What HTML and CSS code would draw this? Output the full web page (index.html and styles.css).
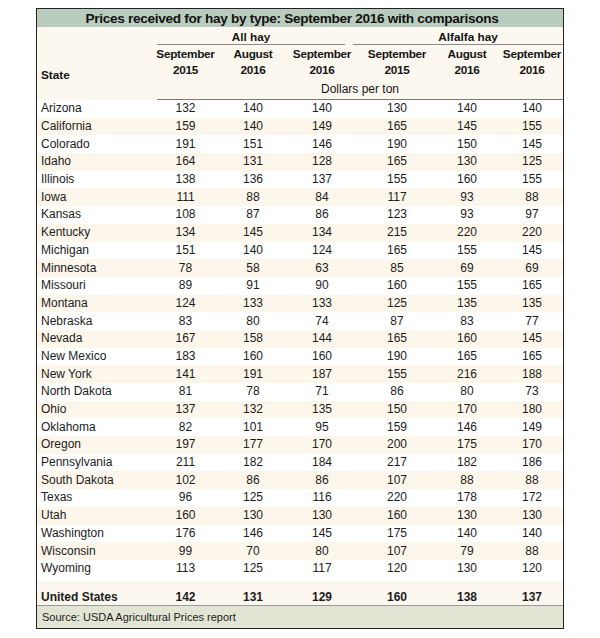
FILE: index.html
```html
<!DOCTYPE html>
<html>
<head>
<meta charset="utf-8">
<link rel="stylesheet" href="styles.css">
</head>
<body>
<div class="card">
  <div class="title">Prices received for hay by type: September 2016 with comparisons</div>
  <table class="grid">
    <colgroup>
      <col class="c-state"><col class="c1"><col class="c2"><col class="c3"><col class="c4"><col class="c5"><col class="c6">
    </colgroup>
    <thead>
      <tr class="group">
        <th></th>
        <th colspan="3"><div class="gl gl-all">All hay</div></th>
        <th colspan="3"><div class="gl gl-alf">Alfalfa hay</div></th>
      </tr>
      <tr class="cols">
        <th rowspan="2" class="state">State</th>
        <th>September<br>2015</th>
        <th>August<br>2016</th>
        <th>September<br>2016</th>
        <th>September<br>2015</th>
        <th>August<br>2016</th>
        <th class="last">September<br>2016</th>
      </tr>
      <tr class="units">
        <th colspan="6"><div class="ul">Dollars per ton</div></th>
      </tr>
    </thead>
    <tbody class="rows">
      <tr><td>Arizona</td><td>132</td><td>140</td><td>140</td><td>130</td><td>140</td><td class="last">140</td></tr>
      <tr><td>California</td><td>159</td><td>140</td><td>149</td><td>165</td><td>145</td><td class="last">155</td></tr>
      <tr><td>Colorado</td><td>191</td><td>151</td><td>146</td><td>190</td><td>150</td><td class="last">145</td></tr>
      <tr><td>Idaho</td><td>164</td><td>131</td><td>128</td><td>165</td><td>130</td><td class="last">125</td></tr>
      <tr><td>Illinois</td><td>138</td><td>136</td><td>137</td><td>155</td><td>160</td><td class="last">155</td></tr>
      <tr><td>Iowa</td><td>111</td><td>88</td><td>84</td><td>117</td><td>93</td><td class="last">88</td></tr>
      <tr><td>Kansas</td><td>108</td><td>87</td><td>86</td><td>123</td><td>93</td><td class="last">97</td></tr>
      <tr><td>Kentucky</td><td>134</td><td>145</td><td>134</td><td>215</td><td>220</td><td class="last">220</td></tr>
      <tr><td>Michigan</td><td>151</td><td>140</td><td>124</td><td>165</td><td>155</td><td class="last">145</td></tr>
      <tr><td>Minnesota</td><td>78</td><td>58</td><td>63</td><td>85</td><td>69</td><td class="last">69</td></tr>
      <tr><td>Missouri</td><td>89</td><td>91</td><td>90</td><td>160</td><td>155</td><td class="last">165</td></tr>
      <tr><td>Montana</td><td>124</td><td>133</td><td>133</td><td>125</td><td>135</td><td class="last">135</td></tr>
      <tr><td>Nebraska</td><td>83</td><td>80</td><td>74</td><td>87</td><td>83</td><td class="last">77</td></tr>
      <tr><td>Nevada</td><td>167</td><td>158</td><td>144</td><td>165</td><td>160</td><td class="last">145</td></tr>
      <tr><td>New Mexico</td><td>183</td><td>160</td><td>160</td><td>190</td><td>165</td><td class="last">165</td></tr>
      <tr><td>New York</td><td>141</td><td>191</td><td>187</td><td>155</td><td>216</td><td class="last">188</td></tr>
      <tr><td>North Dakota</td><td>81</td><td>78</td><td>71</td><td>86</td><td>80</td><td class="last">73</td></tr>
      <tr><td>Ohio</td><td>137</td><td>132</td><td>135</td><td>150</td><td>170</td><td class="last">180</td></tr>
      <tr><td>Oklahoma</td><td>82</td><td>101</td><td>95</td><td>159</td><td>146</td><td class="last">149</td></tr>
      <tr><td>Oregon</td><td>197</td><td>177</td><td>170</td><td>200</td><td>175</td><td class="last">170</td></tr>
      <tr><td>Pennsylvania</td><td>211</td><td>182</td><td>184</td><td>217</td><td>182</td><td class="last">186</td></tr>
      <tr><td>South Dakota</td><td>102</td><td>86</td><td>86</td><td>107</td><td>88</td><td class="last">88</td></tr>
      <tr><td>Texas</td><td>96</td><td>125</td><td>116</td><td>220</td><td>178</td><td class="last">172</td></tr>
      <tr><td>Utah</td><td>160</td><td>130</td><td>130</td><td>160</td><td>130</td><td class="last">130</td></tr>
      <tr><td>Washington</td><td>176</td><td>146</td><td>145</td><td>175</td><td>140</td><td class="last">140</td></tr>
      <tr><td>Wisconsin</td><td>99</td><td>70</td><td>80</td><td>107</td><td>79</td><td class="last">88</td></tr>
      <tr><td>Wyoming</td><td>113</td><td>125</td><td>117</td><td>120</td><td>130</td><td class="last">120</td></tr>
    </tbody>
    <tbody class="total">
      <tr class="gap"><td colspan="7"></td></tr>
      <tr class="us"><td>United States</td><td>142</td><td>131</td><td>129</td><td>160</td><td>138</td><td class="last">137</td></tr>
    </tbody>
  </table>
  <div class="source">Source: USDA Agricultural Prices report</div>
</div>
</body>
</html>
```

FILE: styles.css
```css
html, body {
  background: #ffffff;
}
body {
  margin: 8px 0 0 36px;
  font-family: "Liberation Sans", Arial, sans-serif;
  color: #1c1c1c;
}
.card {
  width: 528px;
  box-sizing: border-box;
  border: 1px solid #222222;
  background: #fdf8ef;
}
.title {
  height: 18px;
  line-height: 19px;
  background: #b9cbbd;
  text-align: center;
  font-weight: bold;
  font-size: 13.6px;
  letter-spacing: -0.3px;
  padding-right: 16px;
  color: #111111;
}
.grid {
  width: 526px;
  border-collapse: collapse;
  border-spacing: 0;
  table-layout: fixed;
}
.grid th, .grid td {
  padding: 0;
}
.c-state { width: 115px; }
.c1 { width: 67px; }
.c2 { width: 68px; }
.c3 { width: 70px; }
.c4 { width: 80px; }
.c5 { width: 60px; }
.c6 { width: 66px; }
.last { padding-left: 4px !important; }

thead th {
  font-size: 11.8px;
  font-weight: bold;
  text-align: center;
  color: #151515;
}
.group th {
  height: 17px;
  vertical-align: top;
}
.gl {
  padding-top: 3px;
  line-height: 14px;
  border-bottom: 1px solid #8a8a8a;
}
.gl-all {
  margin: 0 12px 0 5px;
}
.gl-alf {
  margin-left: -4px;
  padding-left: 20px;
}
.cols th {
  height: 33px;
  line-height: 16px;
  vertical-align: top;
  padding-top: 1px;
  letter-spacing: -0.3px;
}
.cols th.state {
  text-align: left;
  vertical-align: middle;
  padding-left: 4px;
  padding-top: 4px;
  letter-spacing: 0;
}
.units th {
  height: 20px;
  font-weight: normal;
  font-size: 12px;
  vertical-align: bottom;
}
.ul {
  margin-left: 5px;
  line-height: 17px;
  padding-top: 2px;
  padding-bottom: 1px;
  border-bottom: 1px solid #7a7a7a;
}
.rows td, .us td {
  height: 17.7px;
  font-size: 12px;
  text-align: center;
  line-height: 17px;
}
.rows td:first-child, .us td:first-child {
  text-align: left;
  padding-left: 4px;
}
.rows tr {
  background: #ffffff;
}
.rows tr:nth-child(even) {
  background: #fdf6ea;
}
.gap td {
  height: 3px;
  background: #ffffff;
}
.us {
  background: #fdf8ef;
}
.us td {
  height: 24px;
  font-weight: bold;
  font-size: 12px;
  vertical-align: bottom;
  line-height: 16px;
  padding-bottom: 0;
}
.source {
  border-top: 1px solid #9a9a9a;
  background: #e3e5d4;
  height: 22px;
  line-height: 22px;
  font-size: 11px;
  padding-left: 5px;
  color: #222222;
}
```
